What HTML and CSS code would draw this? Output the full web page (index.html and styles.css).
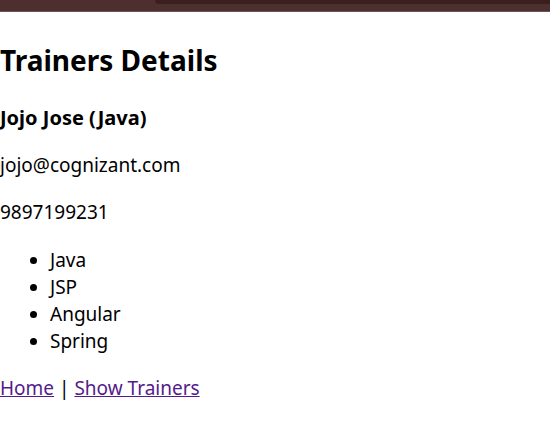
FILE: index.html
```html
<!DOCTYPE html>
<html>
<head>
<meta charset="utf-8">
<link rel="stylesheet" href="styles.css">
</head>
<body>
<div class="chrome"><div class="tab"></div></div>
<main class="page">
  <h1 class="title">Trainers Details</h1>
  <h4 class="name">Jojo Jose (Java)</h4>
  <p class="line email">jojo@cognizant.com</p>
  <p class="line">9897199231</p>
  <ul class="skills">
    <li>Java</li>
    <li>JSP</li>
    <li>Angular</li>
    <li>Spring</li>
  </ul>
  <p class="nav"><a href="#">Home</a> | <a href="#">Show Trainers</a></p>
</main>
</body>
</html>
```
FILE: styles.css
```css
html, body {
  margin: 0;
  padding: 0;
  background: #fff;
}
body {
  font-family: "Noto Sans", "Open Sans", sans-serif;
  font-size: 19px;
  color: #000;
}
.chrome {
  height: 12px;
  background: #4d2f2f;
  border-bottom: 1px solid #6a5555;
  box-sizing: border-box;
  display: flex;
  justify-content: flex-end;
}
.tab {
  width: 395px;
  height: 4px;
  background: #3a1f1e;
  border-bottom-left-radius: 6px;
}
.page {
  padding: 0;
}
.title {
  font-size: 28px;
  font-weight: 700;
  margin: 28px 0 0;
  line-height: 40px;
}
.name {
  font-size: 20px;
  font-weight: 700;
  margin: 24px 0 0;
  line-height: 27px;
}
.line {
  margin: 20px 0 0;
  line-height: 27px;
}
.line.email {
  margin-top: 21px;
}
.skills {
  margin: 21px 0 0;
  padding-left: 50px;
  line-height: 27px;
}
.nav {
  margin: 20px 0 0;
  line-height: 27px;
}
.nav a {
  color: #551a8b;
}
```
